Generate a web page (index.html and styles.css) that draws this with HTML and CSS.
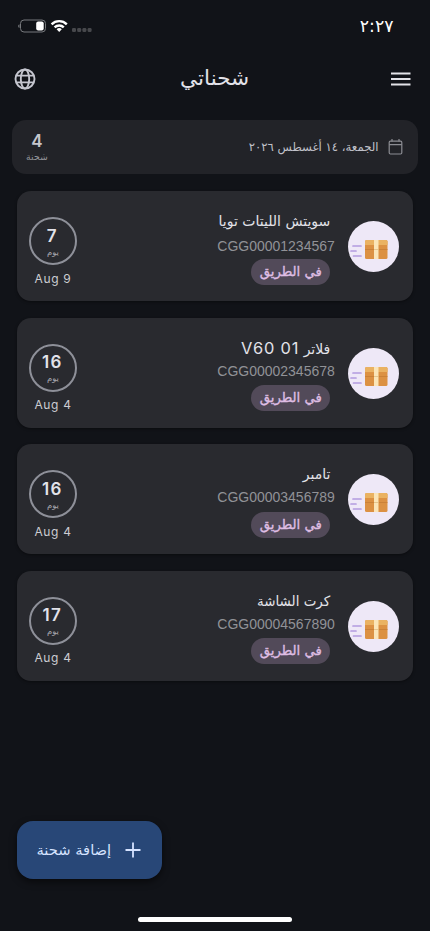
FILE: index.html
```
<!DOCTYPE html>
<html lang="ar" dir="rtl">
<head>
<meta charset="utf-8">
<title>شحناتي</title>
<link rel="stylesheet" href="styles.css">
</head>
<body>
<svg class="symbols" width="0" height="0" aria-hidden="true">
  <symbol id="parcel" viewBox="0 0 51 51">
    <circle cx="25.500" cy="25.500" r="25.500" fill="#eee8f7"/>
    <path d="M5 25h8M3 30h5M5.500 35h7.500" stroke="#b39be0" stroke-width="1.700" stroke-linecap="round"/>
    <rect x="17" y="19" width="22.500" height="19" rx="1.500" fill="#dc9143"/>
    <path d="M18.500 19H38a1.500 1.500 0 0 1 1.500 1.500V24h-22.500v-3.500a1.500 1.500 0 0 1 1.500-1.500z" fill="#eab262"/>
    <path d="M17 28.500h22.500" stroke="#c67c36" stroke-width=".8"/>
    <path d="M26 19h4.500v19H26z" fill="#fbe5b8"/>
    <path d="M26 28.500h4.500" stroke="#dfbd82" stroke-width=".8"/>
  </symbol>
</svg>
<div class="screen">
  <div class="status">
    <span class="clock">٢:٢٧</span>
    <svg class="signals" width="76" height="16" viewBox="0 0 76 16">
      <rect x="2.500" y="2" width="25" height="12" rx="3.500" fill="none" stroke="#77797d"/>
      <path d="M1.500 6.200a2 2 0 0 0 0 3.800z" fill="#77797d"/>
      <rect x="18.200" y="3.500" width="7.500" height="9" rx="2" fill="#fff"/>
      <g fill="none" stroke="#fff" stroke-width="2.400">
        <path d="M33.600 6.300a10.800 10.800 0 0 1 15.200 0"/>
        <path d="M36.600 9.300a6.600 6.600 0 0 1 9.200 0"/>
      </g>
      <path d="M38.600 11.200a4 4 0 0 1 5.200 0L41.200 14z" fill="#fff"/>
      <g fill="#47484c"><rect x="54" y="10" width="4" height="4" rx="1.300"/><rect x="59.200" y="10" width="4" height="4" rx="1.300"/><rect x="64.400" y="10" width="4" height="4" rx="1.300"/><rect x="69.600" y="10" width="4" height="4" rx="1.300"/></g>
    </svg>
  </div>
  <header class="bar">
    <svg width="20" height="14" viewBox="0 0 20 14"><path d="M0 1.500h19.500M0 7h19.500M0 12.500h19.500" stroke="#e3e3e8" stroke-width="2.100"/></svg>
    <h1>شحناتي</h1>
    <svg width="22" height="22" viewBox="0 0 22 22" fill="none" stroke="#c5c6cf" stroke-width="1.900"><circle cx="11" cy="11" r="9.500"/><ellipse cx="11" cy="11" rx="4.200" ry="9.500"/><path d="M2.200 7.600h17.600M2.200 14.400h17.600"/></svg>
  </header>
  <section class="summary">
    <svg width="15" height="16" viewBox="0 0 14 16" fill="none" stroke="#8c8d93" stroke-width="1.200"><rect x=".7" y="2.200" width="12.600" height="12.800" rx="1.200"/><path d="M.7 5.700h12.600M3.500 0v2.500M10.500 0v2.500"/></svg>
    <span class="today">الجمعة، ١٤ أغسطس ٢٠٢٦</span>
    <div class="total"><b>4</b><span>شحنة</span></div>
  </section>
  <main class="list">
    <article class="card first">
      <svg class="avatar"><use href="#parcel"/></svg>
      <div class="info"><h2>سويتش الليتات تويا</h2><p dir="ltr">CGG00001234567</p><span class="pill">في الطريق</span></div>
      <div class="age"><div class="ring"><b>7</b><span>يوم</span></div><time dir="ltr">Aug 9</time></div>
    </article>
    <article class="card">
      <svg class="avatar"><use href="#parcel"/></svg>
      <div class="info"><h2>فلاتر <span class="latin">V60 01</span></h2><p dir="ltr">CGG00002345678</p><span class="pill">في الطريق</span></div>
      <div class="age"><div class="ring"><b>16</b><span>يوم</span></div><time dir="ltr">Aug 4</time></div>
    </article>
    <article class="card">
      <svg class="avatar"><use href="#parcel"/></svg>
      <div class="info"><h2>تامبر</h2><p dir="ltr">CGG00003456789</p><span class="pill">في الطريق</span></div>
      <div class="age"><div class="ring"><b>16</b><span>يوم</span></div><time dir="ltr">Aug 4</time></div>
    </article>
    <article class="card">
      <svg class="avatar"><use href="#parcel"/></svg>
      <div class="info"><h2 class="narrow">كرت الشاشة</h2><p dir="ltr">CGG00004567890</p><span class="pill">في الطريق</span></div>
      <div class="age"><div class="ring"><b>17</b><span>يوم</span></div><time dir="ltr">Aug 4</time></div>
    </article>
  </main>
  <button class="add">
    <svg width="16" height="16" viewBox="0 0 16 16"><path d="M8 .5v15M.5 8h15" stroke="#d6e3ff" stroke-width="1.800"/></svg>
    <span>إضافة شحنة</span>
  </button>
  <div class="home"></div>
</div>
</body>
</html>
```
FILE: styles.css
```
* { box-sizing: border-box; }
body { margin: 0; background: #111318; color: #e2e2e9; font-family: Inter, "DejaVu Sans", sans-serif; }
h1, h2, p { margin: 0; font-weight: 400; }
.symbols { display: block; position: absolute; }
.screen { width: 430px; height: 931px; display: flex; flex-direction: column; overflow: hidden; }
.status { height: 51px; flex: none; display: flex; justify-content: space-between; align-items: center; padding: 0 36.500px 0 18px; }
.clock { font: 500 17.300px/24px "DejaVu Sans", sans-serif; color: #fff; }
.signals { display: block; }
.bar { height: 55px; flex: none; display: flex; justify-content: space-between; align-items: center; padding: 0 19px 0 14px; }
.bar h1 { font: 400 21px/30px "DejaVu Sans", sans-serif; transform: translate(1px, -1px) scaleX(1.03); }
.summary { height: 54px; flex: none; margin: 14.400px 12.400px 17px; border-radius: 14px; background: #222328; display: flex; align-items: center; padding: 0 15px 0 14px; }
.today { margin-right: 9px; font: 11.700px/20px "DejaVu Sans", sans-serif; color: #c0c1c8; white-space: nowrap; }
.total { margin-right: auto; width: 21px; display: flex; flex-direction: column; align-items: center; color: #c5c6cd; }
.total b { font-size: 17px; line-height: 19px; font-weight: 600; }
.total span { font: 9.300px/11px "DejaVu Sans", sans-serif; color: #93949a; }
.list { display: flex; flex-direction: column; gap: 16.600px; padding: 0 16.700px; }
.card { height: 109.900px; border-radius: 14px; background: #292a2f; display: flex; padding: .5px 14px 0 12.300px; box-shadow: 0 1px 3px #0006; }
.avatar { width: 51px; height: 51px; margin-top: 29.300px; flex: none; }
.info { margin-right: 13.500px; display: flex; flex-direction: column; align-items: flex-start; padding-top: 17.500px; }
.info h2 { height: 26px; margin-right: 4.500px; font: 14px/24px "DejaVu Sans", sans-serif; white-space: nowrap; transform-origin: right; }
.info .narrow { transform: scaleX(.96); }
.latin { font-family: Inter, sans-serif; font-size: 16.400px; letter-spacing: .8px; }
.info p { height: 23.500px; font: 14px/19px "Liberation Sans", sans-serif; color: #919297; }
.first .info p { padding-top: 2px; }
.pill { height: 26px; width: 79px; margin-right: 4.500px; border-radius: 13px; background: #524a59; color: #dfbde3; display: flex; align-items: center; justify-content: center; font: 13.200px/22px "DejaVu Sans", sans-serif; -webkit-text-stroke: .35px #dfbde3; }
.age { margin-right: auto; width: 48px; display: flex; flex-direction: column; align-items: center; padding-top: 25.500px; }
.ring { width: 48px; height: 48px; border: 2px solid #8e9099; border-radius: 50%; display: flex; flex-direction: column; align-items: center; padding-top: 6.500px; }
.ring b { font-size: 17px; line-height: 21px; font-weight: 600; letter-spacing: 1.300px; margin-left: -1.300px; }
.ring span { font: 8.500px/10px "DejaVu Sans", sans-serif; color: #a5a6ad; }
.age time { margin-top: 4.500px; font-size: 12px; line-height: 18px; letter-spacing: .65px; color: #cccdd2; white-space: nowrap; }
.add { width: 145px; height: 58px; margin: auto auto 38px 16.500px; flex: none; border: 0; border-radius: 16px; background: #284777; color: #d6e3ff; display: flex; align-items: center; padding: 0 21px; gap: 13px; font: 14px/20px "DejaVu Sans", sans-serif; white-space: nowrap; box-shadow: 0 3px 7px #0008; }
.add svg { flex: none; }
.add span { transform: scaleX(1.05); transform-origin: right; }
.home { width: 154px; height: 5px; margin: 0 138px 9px; flex: none; align-self: flex-start; background: #fff; border-radius: 3px; }
```
